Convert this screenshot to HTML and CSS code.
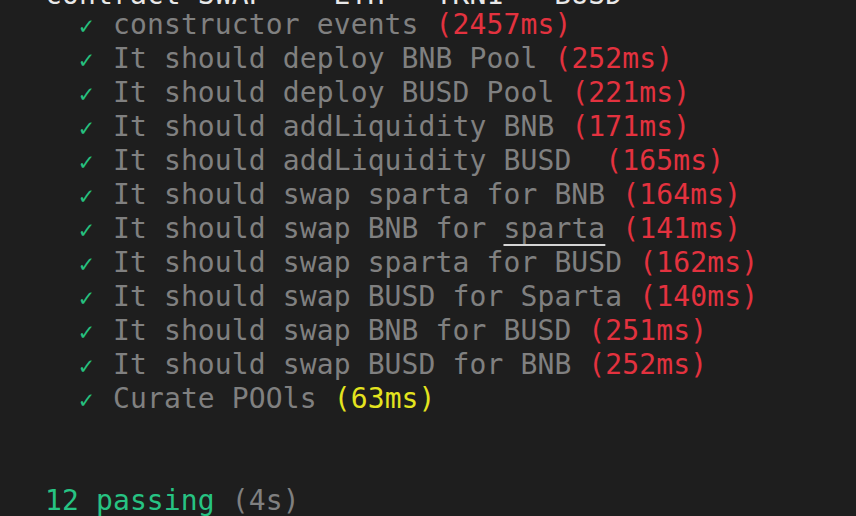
FILE: index.html
```html
<!DOCTYPE html>
<html>
<head>
<meta charset="utf-8">
<link rel="stylesheet" href="styles.css">
</head>
<body>
<div class="term">
  <div class="line head">contract SWAP  - ETH - TKN1 - BUSD</div>
  <div class="line test"><span class="ok">✓</span> <span class="t">constructor events</span> <span class="slow">(2457ms)</span></div>
  <div class="line test"><span class="ok">✓</span> <span class="t">It should deploy BNB Pool</span> <span class="slow">(252ms)</span></div>
  <div class="line test"><span class="ok">✓</span> <span class="t">It should deploy BUSD Pool</span> <span class="slow">(221ms)</span></div>
  <div class="line test"><span class="ok">✓</span> <span class="t">It should addLiquidity BNB</span> <span class="slow">(171ms)</span></div>
  <div class="line test"><span class="ok">✓</span> <span class="t">It should addLiquidity BUSD </span> <span class="slow">(165ms)</span></div>
  <div class="line test"><span class="ok">✓</span> <span class="t">It should swap sparta for BNB</span> <span class="slow">(164ms)</span></div>
  <div class="line test"><span class="ok">✓</span> <span class="t">It should swap BNB for <span class="ul">sparta</span></span> <span class="slow">(141ms)</span></div>
  <div class="line test"><span class="ok">✓</span> <span class="t">It should swap sparta for BUSD</span> <span class="slow">(162ms)</span></div>
  <div class="line test"><span class="ok">✓</span> <span class="t">It should swap BUSD for Sparta</span> <span class="slow">(140ms)</span></div>
  <div class="line test"><span class="ok">✓</span> <span class="t">It should swap BNB for BUSD</span> <span class="slow">(251ms)</span></div>
  <div class="line test"><span class="ok">✓</span> <span class="t">It should swap BUSD for BNB</span> <span class="slow">(252ms)</span></div>
  <div class="line test"><span class="ok">✓</span> <span class="t">Curate POOls</span> <span class="medium">(63ms)</span></div>
  <div class="line blank"> </div>
  <div class="line blank"> </div>
  <div class="line"><span class="pass">12 passing</span> <span class="t">(4s)</span></div>
</div>
</body>
</html>
```

FILE: styles.css
```css
html, body {
  margin: 0;
  padding: 0;
  background: #1e1e1e;
  height: 100%;
  overflow: hidden;
}

.term {
  margin-top: -22px;
  padding-left: 45px;
  font-family: "DejaVu Sans Mono", "Liberation Mono", monospace;
  font-size: 28px;
  line-height: 34px;
  letter-spacing: 0.12px;
  color: #cccccc;
}

.line {
  white-space: pre;
  height: 34px;
}

.head {
  color: #e8e8e8;
  height: 30px;
}

.test {
  padding-left: 34px;
}

.ok {
  display: inline-block;
  width: 17px;
  color: #26c07f;
  font-size: 24px;
  font-weight: bold;
}

.t {
  color: #808080;
}

.slow {
  color: #e3323f;
}

.medium {
  color: #e4e41f;
}

.pass {
  color: #27c383;
}

.ul {
  text-decoration: underline;
  text-decoration-color: #d4d4d4;
  text-decoration-thickness: 2px;
  text-underline-offset: 6px;
}
```
